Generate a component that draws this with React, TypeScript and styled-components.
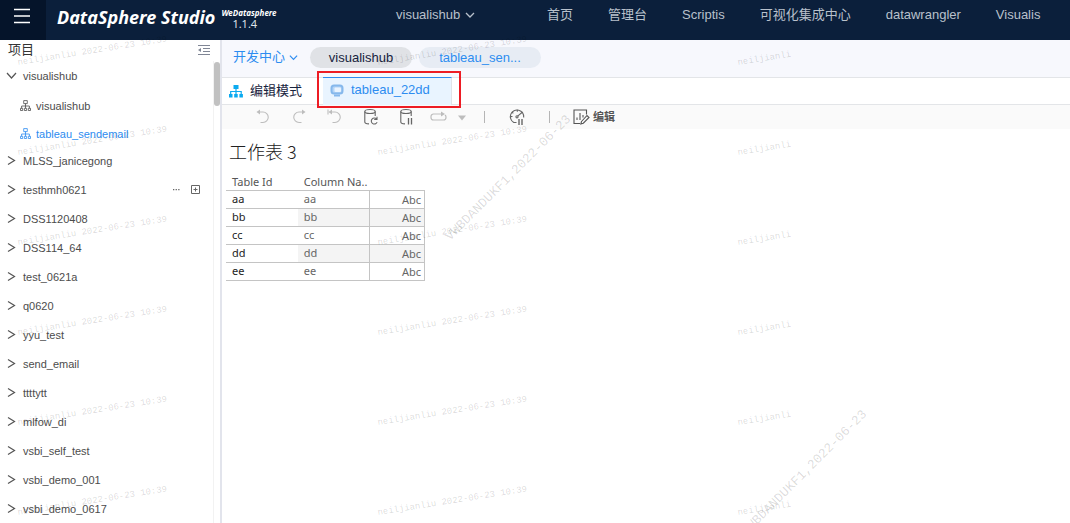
import React from 'react';
import styled, { createGlobalStyle } from 'styled-components';

const GlobalStyle = createGlobalStyle`
  * { box-sizing: border-box; }
  body { margin: 0; background: #fff; }
  body, button { font-family: "Liberation Sans", "Noto Sans CJK SC", sans-serif; }
  button { border: 0; padding: 0; background: none; color: inherit; cursor: pointer; }
  ul { margin: 0; padding: 0; list-style: none; }
  a { color: inherit; text-decoration: none; }
  svg { display: block; flex: none; }
`;

const Page = styled.div`
  position: relative;
  display: flex;
  flex-direction: column;
  height: 100vh;
  overflow: hidden;
`;

const Header = styled.header`
  display: flex;
  flex: none;
  height: 40px;
  background: #0b1f3b;
  color: #b9c1cc;
`;

const MenuButton = styled.button`
  display: flex;
  justify-content: center;
  width: 46px;
  padding: 8px 3px 0 0;
  background: #05142a;
  color: #fff;
`;

const Brand = styled.div`
  display: flex;
  width: 350px;
  flex: none;
  padding: 5px 0 0 11px;
  color: #fff;
`;

const BrandName = styled.span`
  font: italic 700 18px/24px "Noto Sans", sans-serif;
  white-space: nowrap;
`;

const BrandSide = styled.span`
  display: flex;
  flex-direction: column;
  padding: 3px 0 0 6px;
`;

const BrandOwner = styled.span`
  font: italic 700 8px/9px "Noto Sans", sans-serif;
`;

const Version = styled.span`
  padding-left: 11px;
  font: 11px/14px "Noto Sans", sans-serif;
  color: #dfe3ea;
`;

const Workspace = styled.button`
  display: flex;
  align-items: center;
  gap: 5px;
  width: 151px;
  flex: none;
  height: 29px;
  font-size: 13px;
`;

const Nav = styled.nav`
  display: flex;
  gap: 35px;
  font-size: 13px;
  line-height: 29px;
  white-space: nowrap;
`;

const Body = styled.div`
  display: flex;
  flex: 1;
  min-height: 0;
`;

const Sidebar = styled.aside`
  display: flex;
  flex: none;
  flex-direction: column;
  width: 222px;
  border-right: 2px solid #e2e4ec;
  color: #515a6e;
`;

const SidebarHead = styled.div`
  display: flex;
  align-items: center;
  justify-content: space-between;
  flex: none;
  height: 21px;
  padding: 0 10px 2px 8px;
  font-size: 13px;
  line-height: 18px;
  color: #333;
`;

const SidebarBody = styled.div`
  display: flex;
  flex: 1;
  min-height: 0;
`;

const Tree = styled.ul`
  flex: 1;
  overflow: hidden;
`;

const TreeRow = styled.li<{ $child?: boolean; $active?: boolean }>`
  display: flex;
  align-items: center;
  gap: ${p => (p.$child ? 5 : 6)}px;
  height: ${p => (p.$child ? 28 : 29)}px;
  padding: ${p => (p.$child ? '3px 13px 0 20px' : '0 13px 0 6px')};
  font-size: 11px;
  line-height: 14px;
  color: ${p => (p.$active ? '#2d8cf0' : '#4c4c4c')};
`;

const RowActions = styled.span`
  display: flex;
  align-items: center;
  gap: 10px;
  margin-left: auto;
  color: #666;
`;

const ScrollTrack = styled.div`
  width: 7px;
  flex: none;
  border-left: 1px solid #f2f2f2;
`;

const ScrollThumb = styled.div`
  height: 44px;
  margin-top: 1px;
  border-radius: 3px;
  background: #c1c1c1;
`;

const Main = styled.main`
  flex: 1;
  min-width: 0;
`;

const Crumbs = styled.div`
  display: flex;
  align-items: center;
  height: 38px;
  padding: 0 0 3px 11px;
  border-bottom: 1px solid #e3e5e8;
  background: #f7f8fd;
  font-size: 13px;
`;

const AreaButton = styled.button`
  display: flex;
  align-items: center;
  gap: 4px;
  width: 77px;
  font-size: 13px;
  line-height: 20px;
  color: #2d8cf0;
`;

const Pill = styled.button<{ $active?: boolean }>`
  width: ${p => (p.$active ? 102 : 122)}px;
  height: 21px;
  margin-right: 7px;
  border-radius: 11px;
  background: ${p => (p.$active ? '#e0e2e6' : '#e7ecf4')};
  font-size: 13px;
  line-height: 19px;
  color: ${p => (p.$active ? '#17233d' : '#2d8cf0')};
`;

const Tabs = styled.div`
  display: flex;
  height: 27px;
  padding-left: 7px;
  border-bottom: 1px solid #e3e5e8;
`;

const Mode = styled.button`
  display: flex;
  align-items: center;
  gap: 7px;
  width: 94px;
  font-size: 13px;
  line-height: 20px;
  color: #17233d;
`;

const Tab = styled.button`
  display: flex;
  align-items: center;
  gap: 7px;
  width: 129px;
  height: 28px;
  margin-top: -1px;
  padding: 0 0 3px 7px;
  border-top: 1px solid #2d8cf0;
  border-right: 1px solid #dfe3e8;
  background: #e9f4ff;
  font-size: 13px;
  line-height: 20px;
  color: #2d8cf0;
`;

const TabMarker = styled.div`
  position: relative;
  &::after {
    content: "";
    position: absolute;
    inset: -7px -9px -4px -6px;
    border: 2px solid #ed1c24;
    pointer-events: none;
  }
`;

const Toolbar = styled.div`
  display: flex;
  align-items: center;
  height: 24px;
  padding-left: 31px;
  background: #fafafa;
  color: #666;
`;

const ToolGroup = styled.div<{ $gap: number; $after: number }>`
  display: flex;
  align-items: center;
  gap: ${p => p.$gap}px;
  margin-right: ${p => p.$after}px;
`;

const Tool = styled.button<{ $muted?: boolean }>`
  color: ${p => (p.$muted ? '#bdbdbd' : '#666')};
`;

const Divider = styled.span`
  width: 1px;
  height: 12px;
  background: #b5b5b5;
`;

const EditButton = styled.button`
  display: flex;
  align-items: center;
  gap: 3px;
  margin-left: 22px;
  font-size: 11px;
  font-weight: 700;
  line-height: 16px;
  color: #555;
`;

const Sheet = styled.section`
  padding: 8px 4px;
`;

const SheetTitle = styled.h1`
  margin: 0 0 9px;
  padding-left: 3px;
  font: 300 18px/28px "Noto Sans CJK SC", sans-serif;
  color: #222;
`;

const DataTable = styled.table`
  width: 199px;
  border-collapse: collapse;
  table-layout: fixed;
  font: 11px/14px "Noto Sans", sans-serif;
  color: #333;
`;

const Th = styled.th`
  height: 16px;
  padding: 0 0 0 6px;
  border-bottom: 1px solid #c4c4c4;
  font-weight: 400;
  text-align: left;
  white-space: nowrap;
  color: #555;
  &:last-child { width: 55px; }
`;

const Td = styled.td<{ $kind: 'id' | 'name' | 'value'; $shade?: boolean }>`
  height: 18px;
  padding: ${p => (p.$kind === 'value' ? '1px 3px 0 0' : '0 0 0 6px')};
  border: solid #c4c4c4;
  border-width: ${p => (p.$kind === 'value' ? '1px' : '0 0 1px 0')};
  text-align: ${p => (p.$kind === 'value' ? 'right' : 'left')};
  color: ${p => (p.$kind === 'id' ? '#222' : '#666')};
  background: ${p => (p.$shade && p.$kind !== 'id' ? '#f4f4f4' : 'transparent')};
`;

const Watermark = styled.svg`
  position: absolute;
  top: 0;
  left: 0;
  width: 100%;
  height: 100%;
  pointer-events: none;
`;

const Chevron = ({ size = 10 }: { size?: number }) => (
  <svg width={size} height={size} viewBox="0 0 10 10" fill="none" stroke="currentColor" strokeWidth="1.3">
    <path d="M1 3l4 4 4-4" />
  </svg>
);

const Arrow = ({ open }: { open?: boolean }) => (
  <svg width="11" height="11" viewBox="0 0 11 11" fill="none" stroke="#555" strokeWidth="1.2">
    <path d={open ? 'M1 3l4.5 5L10 3' : 'M2 1.500l6.500 4L2 9.500'} />
  </svg>
);

const FlowIcon = () => (
  <svg width="11" height="11" viewBox="0 0 11 11" fill="none" stroke="currentColor" strokeWidth="0.8">
    <path d="M3.700.600h3.600v3H3.700zM.500 8.300h2.200v2.200H.500zM4.400 8.300h2.200v2.200H4.400zM8.300 8.300h2.200v2.200H8.300z" />
    <path d="M5.500 3.600v4.700M1.600 8.300V6h7.800v2.300" />
  </svg>
);

const UndoIcon = ({ mode }: { mode: 'undo' | 'redo' | 'revert' }) => (
  <svg width="20" height="18" viewBox="0 0 20 18" fill="none" stroke="currentColor" strokeWidth="1.1">
    <g transform={mode === 'redo' ? 'matrix(-1 0 0 1 20 0)' : undefined}>
      <path d="M5 4h5a5 5 0 0 1 0 10.500H7.500" />
      <path fill="currentColor" stroke="none" d="M3.500 4L7 1.500v5z" />
      {mode === 'revert' && <path d="M3 1.500v5" />}
    </g>
  </svg>
);

const DatabaseIcon = ({ paused }: { paused?: boolean }) => (
  <svg width="20" height="20" viewBox="0 0 20 20" fill="none" stroke="currentColor" strokeWidth="1.1">
    <ellipse cx="9" cy="4.500" rx="5.200" ry="2" />
    <path d="M3.800 4.500v10.500c0 1 1.800 1.800 4.200 1.900M14.200 4.500V9" />
    {paused ? (
      <path strokeWidth="1.300" d="M11.500 11v6.500M14.500 11v6.500" />
    ) : (
      <path d="M15.600 12.100a3 3 0 1 0 .500 3M16 9.800v2.700h-2.800" />
    )}
  </svg>
);

const GaugeIcon = () => (
  <svg width="20" height="20" viewBox="0 0 20 20" fill="none" stroke="currentColor" strokeWidth="1.100">
    <path d="M9.500 15.500H6.800A6.700 6.700 0 1 1 16.700 10.500" />
    <path d="M10.300 2.800v2M5 5l1.300 1.300M3.500 9.500h2M15.600 5l-5 4.200" />
    <circle cx="10" cy="9.800" r="1.100" />
    <path strokeWidth="1.400" d="M12 12v6M15 12v6" />
  </svg>
);

const EditIcon = () => (
  <svg width="18" height="18" viewBox="0 0 18 18" fill="none" stroke="currentColor" strokeWidth="1.100">
    <path d="M14.500 6.500V2H2v13.500h6M5 12V9.500M8 12V5M11 9.500V7" />
    <path d="M9.500 13.500l5.500-6 2 2-5.700 5.700-2.500.700z" />
  </svg>
);

type Project = { name: string; child?: boolean; active?: boolean; open?: boolean; actions?: boolean };

const projects: Project[] = [
  { name: 'visualishub', open: true },
  { name: 'visualishub', child: true },
  { name: 'tableau_sendemail', child: true, active: true },
  { name: 'MLSS_janicegong' },
  { name: 'testhmh0621', actions: true },
  { name: 'DSS1120408' },
  { name: 'DSS114_64' },
  { name: 'test_0621a' },
  { name: 'q0620' },
  { name: 'yyu_test' },
  { name: 'send_email' },
  { name: 'ttttytt' },
  { name: 'mlfow_di' },
  { name: 'vsbi_self_test' },
  { name: 'vsbi_demo_001' },
  { name: 'vsbi_demo_0617' },
];

const links = ['首页', '管理台', 'Scriptis', '可视化集成中心', 'datawrangler', 'Visualis'];
const rows = ['aa', 'bb', 'cc', 'dd', 'ee'];

// User mark, repeated down three columns
const userColumns = [
  { x: 18, text: 'neiljianliu 2022-06-23 10:39' },
  { x: 378, text: 'neiljianliu 2022-06-23 10:39' },
  { x: 738, text: 'neiljianli' },
];
const userRows = [65, 155, 245, 335, 425, 515];

// Baseline start and opacity of each diagonal device mark
const deviceMarks = [
  [450, 241, 0.15], [746, 536, 0.15],
  [122, 204, 0.02], [544, 184, 0.02], [666, 257, 0.02],
  [844, 486, 0.02], [40, 484, 0.02], [236, 294, 0.02],
];

const Marks = () => (
  <Watermark aria-hidden="true">
    {userColumns.map(({ x, text }) => userRows.map(y => (
      <text key={`${x}-${y}`} transform={`translate(${x} ${y}) rotate(-9)`} fontFamily="Liberation Mono" fontSize="9" fill="#000" fillOpacity=".15">
        {text}
      </text>
    )))}
    {deviceMarks.map(([x, y, opacity]) => (
      <text key={`${x}-${y}`} transform={`translate(${x} ${y}) rotate(-45)`} fontFamily="Liberation Mono" fontSize="13" fill="#000" fillOpacity={opacity}>
        VWBDANDUKF1,2022-06-23
      </text>
    ))}
  </Watermark>
);

export default function App() {
  return (
    <Page>
      <GlobalStyle />
      <Header>
        <MenuButton aria-label="Menu">
          <svg width="16" height="16" viewBox="0 0 16 16" stroke="currentColor" strokeWidth="1.500">
            <path d="M0 1.500h16M0 8h16M0 14.500h16" />
          </svg>
        </MenuButton>
        <Brand>
          <BrandName>DataSphere Studio</BrandName>
          <BrandSide>
            <BrandOwner>WeDatasphere</BrandOwner>
            <Version>1.1.4</Version>
          </BrandSide>
        </Brand>
        <Workspace>visualishub <Chevron /></Workspace>
        <Nav>
          {links.map(link => <a key={link} href="#">{link}</a>)}
        </Nav>
      </Header>
      <Body>
        <Sidebar>
          <SidebarHead>
            项目
            <button aria-label="Collapse">
              <svg width="12" height="12" viewBox="0 0 12 12" fill="none" stroke="#808695">
                <path d="M0 1.500h12M5 4.500h7M5 7.500h7M0 10.500h12" />
                <path fill="#808695" stroke="none" d="M0 6l3-2v4z" />
              </svg>
            </button>
          </SidebarHead>
          <SidebarBody>
            <Tree>
              {projects.map((p, i) => (
                <TreeRow key={i} $child={p.child} $active={p.active}>
                  {p.child ? <FlowIcon /> : <Arrow open={p.open} />}
                  <a href="#">{p.name}</a>
                  {p.actions && (
                    <RowActions>
                      <button aria-label="More">
                        <svg width="9" height="9" viewBox="0 0 9 9" fill="currentColor">
                          <path d="M1 4h1.300v1.200H1zM3.600 4h1.300v1.200H3.600zM6.200 4h1.300v1.200H6.200z" />
                        </svg>
                      </button>
                      <button aria-label="Add">
                        <svg width="9" height="9" viewBox="0 0 9 9" fill="none" stroke="currentColor">
                          <path d="M.500.500h8v8h-8zM4.500 2.500v4M2.500 4.500h4" />
                        </svg>
                      </button>
                    </RowActions>
                  )}
                </TreeRow>
              ))}
            </Tree>
            <ScrollTrack><ScrollThumb /></ScrollTrack>
          </SidebarBody>
        </Sidebar>
        <Main>
          <Crumbs>
            <AreaButton>开发中心 <Chevron size={9} /></AreaButton>
            <Pill $active>visualishub</Pill>
            <Pill>tableau_sen...</Pill>
          </Crumbs>
          <Tabs>
            <Mode>
              <svg width="14" height="14" viewBox="0 0 14 14" fill="#0baaf0">
                <path d="M4.500 1h5v4h-5zM0 10h3.500v3.500H0zM5.200 10h3.500v3.500H5.200zM10.400 10h3.500v3.500h-3.500z" />
                <path fill="none" stroke="#0baaf0" strokeWidth="1.200" d="M7 4v6M1.700 10V7.500h10.500V10" />
              </svg>
              编辑模式
            </Mode>
            <TabMarker>
              <Tab>
                <svg width="14" height="14" viewBox="0 0 14 14" fill="none" stroke="#86b8ec" strokeWidth="2">
                  <rect x="1.500" y="2.500" width="11" height="8" rx="2.500" fill="#b5d5f7" />
                  <rect x="4.500" y="4.500" width="6.500" height="4.500" rx="1" fill="#eaf4ff" stroke="none" />
                  <path d="M4 12.500h6" />
                </svg>
                tableau_22dd
              </Tab>
            </TabMarker>
          </Tabs>
          <Toolbar>
            <ToolGroup $gap={16} $after={12}>
              <Tool $muted aria-label="Undo"><UndoIcon mode="undo" /></Tool>
              <Tool $muted aria-label="Redo"><UndoIcon mode="redo" /></Tool>
              <Tool $muted aria-label="Revert"><UndoIcon mode="revert" /></Tool>
              <Tool aria-label="Refresh data"><DatabaseIcon /></Tool>
              <Tool aria-label="Pause data"><DatabaseIcon paused /></Tool>
            </ToolGroup>
            <ToolGroup $gap={8} $after={17}>
              <Tool $muted aria-label="Replay">
                <svg width="20" height="16" viewBox="0 0 20 16" fill="none" stroke="currentColor" strokeWidth="1.200">
                  <path d="M13 5H4.500A2.500 2.500 0 0 0 2 7.500v1A2.500 2.500 0 0 0 4.500 11h10A2.500 2.500 0 0 0 17 8.500V8a2.500 2.500 0 0 0-1-2" />
                  <path fill="currentColor" stroke="none" d="M12 2.500L16 5l-4 2.500z" />
                </svg>
              </Tool>
              <Tool $muted aria-label="Replay options">
                <svg width="10" height="10" viewBox="0 0 10 10" fill="currentColor"><path d="M1 3.500h8L5 8.500z" /></svg>
              </Tool>
            </ToolGroup>
            <ToolGroup $gap={22} $after={0}>
              <Divider />
              <Tool aria-label="Pause updates"><GaugeIcon /></Tool>
              <Divider />
            </ToolGroup>
            <EditButton><EditIcon />编辑</EditButton>
          </Toolbar>
          <Sheet>
            <SheetTitle>工作表 3</SheetTitle>
            <DataTable>
              <thead>
                <tr><Th>Table Id</Th><Th>Column Na..</Th><Th aria-label="Value" /></tr>
              </thead>
              <tbody>
                {rows.map((r, i) => (
                  <tr key={r}>
                    <Td $kind="id">{r}</Td>
                    <Td $kind="name" $shade={i % 2 === 1}>{r}</Td>
                    <Td $kind="value" $shade={i % 2 === 1}>Abc</Td>
                  </tr>
                ))}
              </tbody>
            </DataTable>
          </Sheet>
        </Main>
      </Body>
      <Marks />
    </Page>
  );
}
